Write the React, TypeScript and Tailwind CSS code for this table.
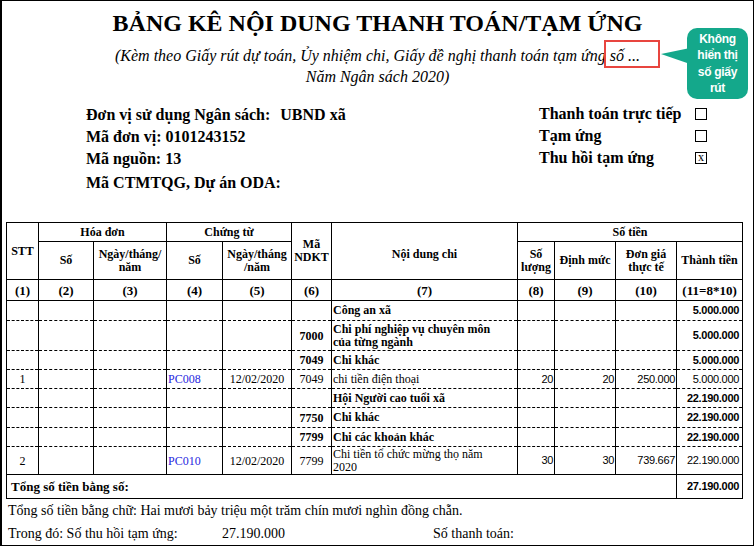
import React from "react";

const Checkbox = ({ checked }: { checked?: boolean }) => (
    <span className="flex h-[12px] w-[12px] items-center justify-center border border-black pb-[2px] text-[12px] leading-none font-normal">
        {checked ? "x" : ""}
    </span>
);

type Row = {
    h: number;
    stt?: string;
    ct?: string;
    date?: string;
    code?: string;
    codeBold?: boolean;
    text: React.ReactNode;
    bold?: boolean;
    sl?: string;
    dm?: string;
    dg?: string;
    amount: string;
    last?: boolean;
};

const rows: Row[] = [
    { h: 20, text: "Công an xã", bold: true, amount: "5.000.000" },
    {
        h: 30,
        code: "7000",
        codeBold: true,
        text: (
            <>
                Chi phí nghiệp vụ chuyên môn
                <br />
                của từng ngành
            </>
        ),
        bold: true,
        amount: "5.000.000",
    },
    { h: 18, code: "7049", codeBold: true, text: "Chi khác", bold: true, amount: "5.000.000" },
    {
        h: 19,
        stt: "1",
        ct: "PC008",
        date: "12/02/2020",
        code: "7049",
        text: "chi tiền điện thoại",
        sl: "20",
        dm: "20",
        dg: "250.000",
        amount: "5.000.000",
    },
    { h: 19, text: "Hội Người cao tuổi xã", bold: true, amount: "22.190.000" },
    { h: 20, code: "7750", codeBold: true, text: "Chi khác", bold: true, amount: "22.190.000" },
    { h: 18, code: "7799", codeBold: true, text: "Chi các khoản khác", bold: true, amount: "22.190.000" },
    {
        h: 28,
        stt: "2",
        ct: "PC010",
        date: "12/02/2020",
        code: "7799",
        text: (
            <>
                Chi tiền tổ chức mừng thọ năm
                <br />
                2020
            </>
        ),
        sl: "30",
        dm: "30",
        dg: "739.667",
        amount: "22.190.000",
        last: true,
    },
];

const th = "border border-black p-0 text-center align-middle text-[12px] font-bold leading-[13px]";
const num = "font-['Liberation_Sans',Arial,sans-serif] text-[11px] tracking-[-0.3px]";

const App = () => {
    return (
        <div className="relative h-[546px] w-[754px] border-t border-r border-b border-l-2 border-black bg-white font-['Liberation_Serif','Times_New_Roman',serif] text-black">
            {/* heading */}
            <div className="pt-[8px] text-center text-[24px] font-bold leading-[28px]">
                BẢNG KÊ NỘI DUNG THANH TOÁN/TẠM ỨNG
            </div>
            <div className="mt-[8px] text-center text-[16px] italic leading-[21px]">
                (Kèm theo Giấy rút dự toán, Ủy nhiệm chi, Giấy đề nghị thanh toán tạm ứng số ...
                <br />
                Năm Ngân sách 2020)
            </div>

            {/* info */}
            <div className="mt-[17px] flex text-[16px] font-bold leading-[22px]">
                <div className="ml-[84px] w-[453px]">
                    <div>
                        Đơn vị sử dụng Ngân sách:<span className="ml-[10px]">UBND xã</span>
                    </div>
                    <div>Mã đơn vị: 0101243152</div>
                    <div>Mã nguồn: 13</div>
                    <div className="mt-[2px]">Mã CTMTQG, Dự án ODA:</div>
                </div>
                <div className="-mt-[1px]">
                    {[
                        ["Thanh toán trực tiếp", false],
                        ["Tạm ứng", false],
                        ["Thu hồi tạm ứng", true],
                    ].map(([label, checked]) => (
                        <div key={label as string} className="flex h-[22px] items-center">
                            <span className="w-[156px]">{label}</span>
                            <Checkbox checked={checked as boolean} />
                        </div>
                    ))}
                </div>
            </div>

            {/* table */}
            <table className="mt-[28px] ml-[4px] w-[737px] table-fixed border-collapse">
                <colgroup>
                    <col className="w-[32px]" />
                    <col className="w-[55px]" />
                    <col className="w-[73px]" />
                    <col className="w-[56px]" />
                    <col className="w-[69px]" />
                    <col className="w-[40px]" />
                    <col className="w-[186px]" />
                    <col className="w-[37px]" />
                    <col className="w-[61px]" />
                    <col className="w-[61px]" />
                    <col className="w-[66px]" />
                </colgroup>
                <thead>
                    <tr className="h-[19px]">
                        <th rowSpan={2} className={th}>STT</th>
                        <th colSpan={2} className={th}>Hóa đơn</th>
                        <th colSpan={2} className={th}>Chứng từ</th>
                        <th rowSpan={2} className={th}>
                            Mã
                            <br />
                            NDKT
                        </th>
                        <th rowSpan={2} className={`${th} pt-[6px]`}>Nội dung chi</th>
                        <th colSpan={4} className={th}>Số tiền</th>
                    </tr>
                    <tr className="h-[38px]">
                        <th className={th}>Số</th>
                        <th className={th}>
                            Ngày/tháng/
                            <br />
                            năm
                        </th>
                        <th className={th}>Số</th>
                        <th className={th}>
                            Ngày/tháng
                            <br />
                            /năm
                        </th>
                        <th className={th}>
                            Số
                            <br />
                            lượng
                        </th>
                        <th className={th}>Định mức</th>
                        <th className={th}>
                            Đơn giá
                            <br />
                            thực tế
                        </th>
                        <th className={th}>Thành tiền</th>
                    </tr>
                    <tr className="h-[21px]">
                        {["(1)", "(2)", "(3)", "(4)", "(5)", "(6)", "(7)", "(8)", "(9)", "(10)", "(11=8*10)"].map((n) => (
                            <th key={n} className={`${th} text-[13px]`}>
                                {n}
                            </th>
                        ))}
                    </tr>
                </thead>
                <tbody className="text-[12px]">
                    {rows.map((r, i) => {
                        const cell = `border-x border-b border-black p-0 align-middle ${
                            r.last ? "" : "[border-bottom-style:dashed]"
                        }`;
                        return (
                            <tr key={i} style={{ height: r.h }}>
                                <td className={`${cell} text-center`}>{r.stt}</td>
                                <td className={cell}></td>
                                <td className={cell}></td>
                                <td className={`${cell} pl-[1px] text-[#1f1fe0]`}>{r.ct}</td>
                                <td className={`${cell} text-center`}>{r.date}</td>
                                <td className={`${cell} text-center ${r.codeBold ? "font-bold" : ""}`}>{r.code}</td>
                                <td className={`${cell} pl-[1px] leading-[13px] ${r.bold ? "font-bold" : ""}`}>
                                    {r.text}
                                </td>
                                <td className={`${cell} ${num} pr-[1px] text-right`}>{r.sl}</td>
                                <td className={`${cell} ${num} pr-[1px] text-right`}>{r.dm}</td>
                                <td className={`${cell} ${num} pr-[1px] text-right`}>{r.dg}</td>
                                <td className={`${cell} ${num} pr-[3px] text-right ${r.bold ? "font-bold" : ""}`}>
                                    {r.amount}
                                </td>
                            </tr>
                        );
                    })}
                    <tr className="h-[24px]">
                        <td colSpan={10} className="border border-black pl-[4px] align-middle text-[13px] font-bold">
                            Tổng số tiền bằng số:
                        </td>
                        <td className={`border border-black pr-[3px] text-right align-middle font-bold ${num}`}>
                            27.190.000
                        </td>
                    </tr>
                </tbody>
            </table>

            {/* footer */}
            <div className="pl-[6px] text-[14px] leading-[23px]">
                <div>Tổng số tiền bằng chữ: Hai mươi bảy triệu một trăm chín mươi nghìn đồng chẵn.</div>
                <div className="flex">
                    <span className="w-[214px]">Trong đó: Số thu hồi tạm ứng:</span>
                    <span className="w-[211px]">27.190.000</span>
                    <span>Số thanh toán:</span>
                </div>
            </div>

            {/* annotation overlay */}
            <div className="absolute top-[39px] left-[602px] h-[28px] w-[56px] border-2 border-[#e8453f]" />
            <svg className="absolute top-[39px] left-[657px]" width="32" height="30" viewBox="0 0 32 30">
                <polygon points="2,14 31,8 31,24" fill="#14a88b" />
            </svg>
            <div className="absolute top-[27px] left-[685px] flex h-[71px] w-[61px] flex-col items-center justify-center rounded-[10px] bg-[#14a88b] text-center font-['Liberation_Sans',Arial,sans-serif] text-[12px] font-bold leading-[16.5px] tracking-[-0.3px] text-white">
                Không
                <br />
                hiển thị
                <br />
                số giấy
                <br />
                rút
            </div>
        </div>
    );
};

export default App;
